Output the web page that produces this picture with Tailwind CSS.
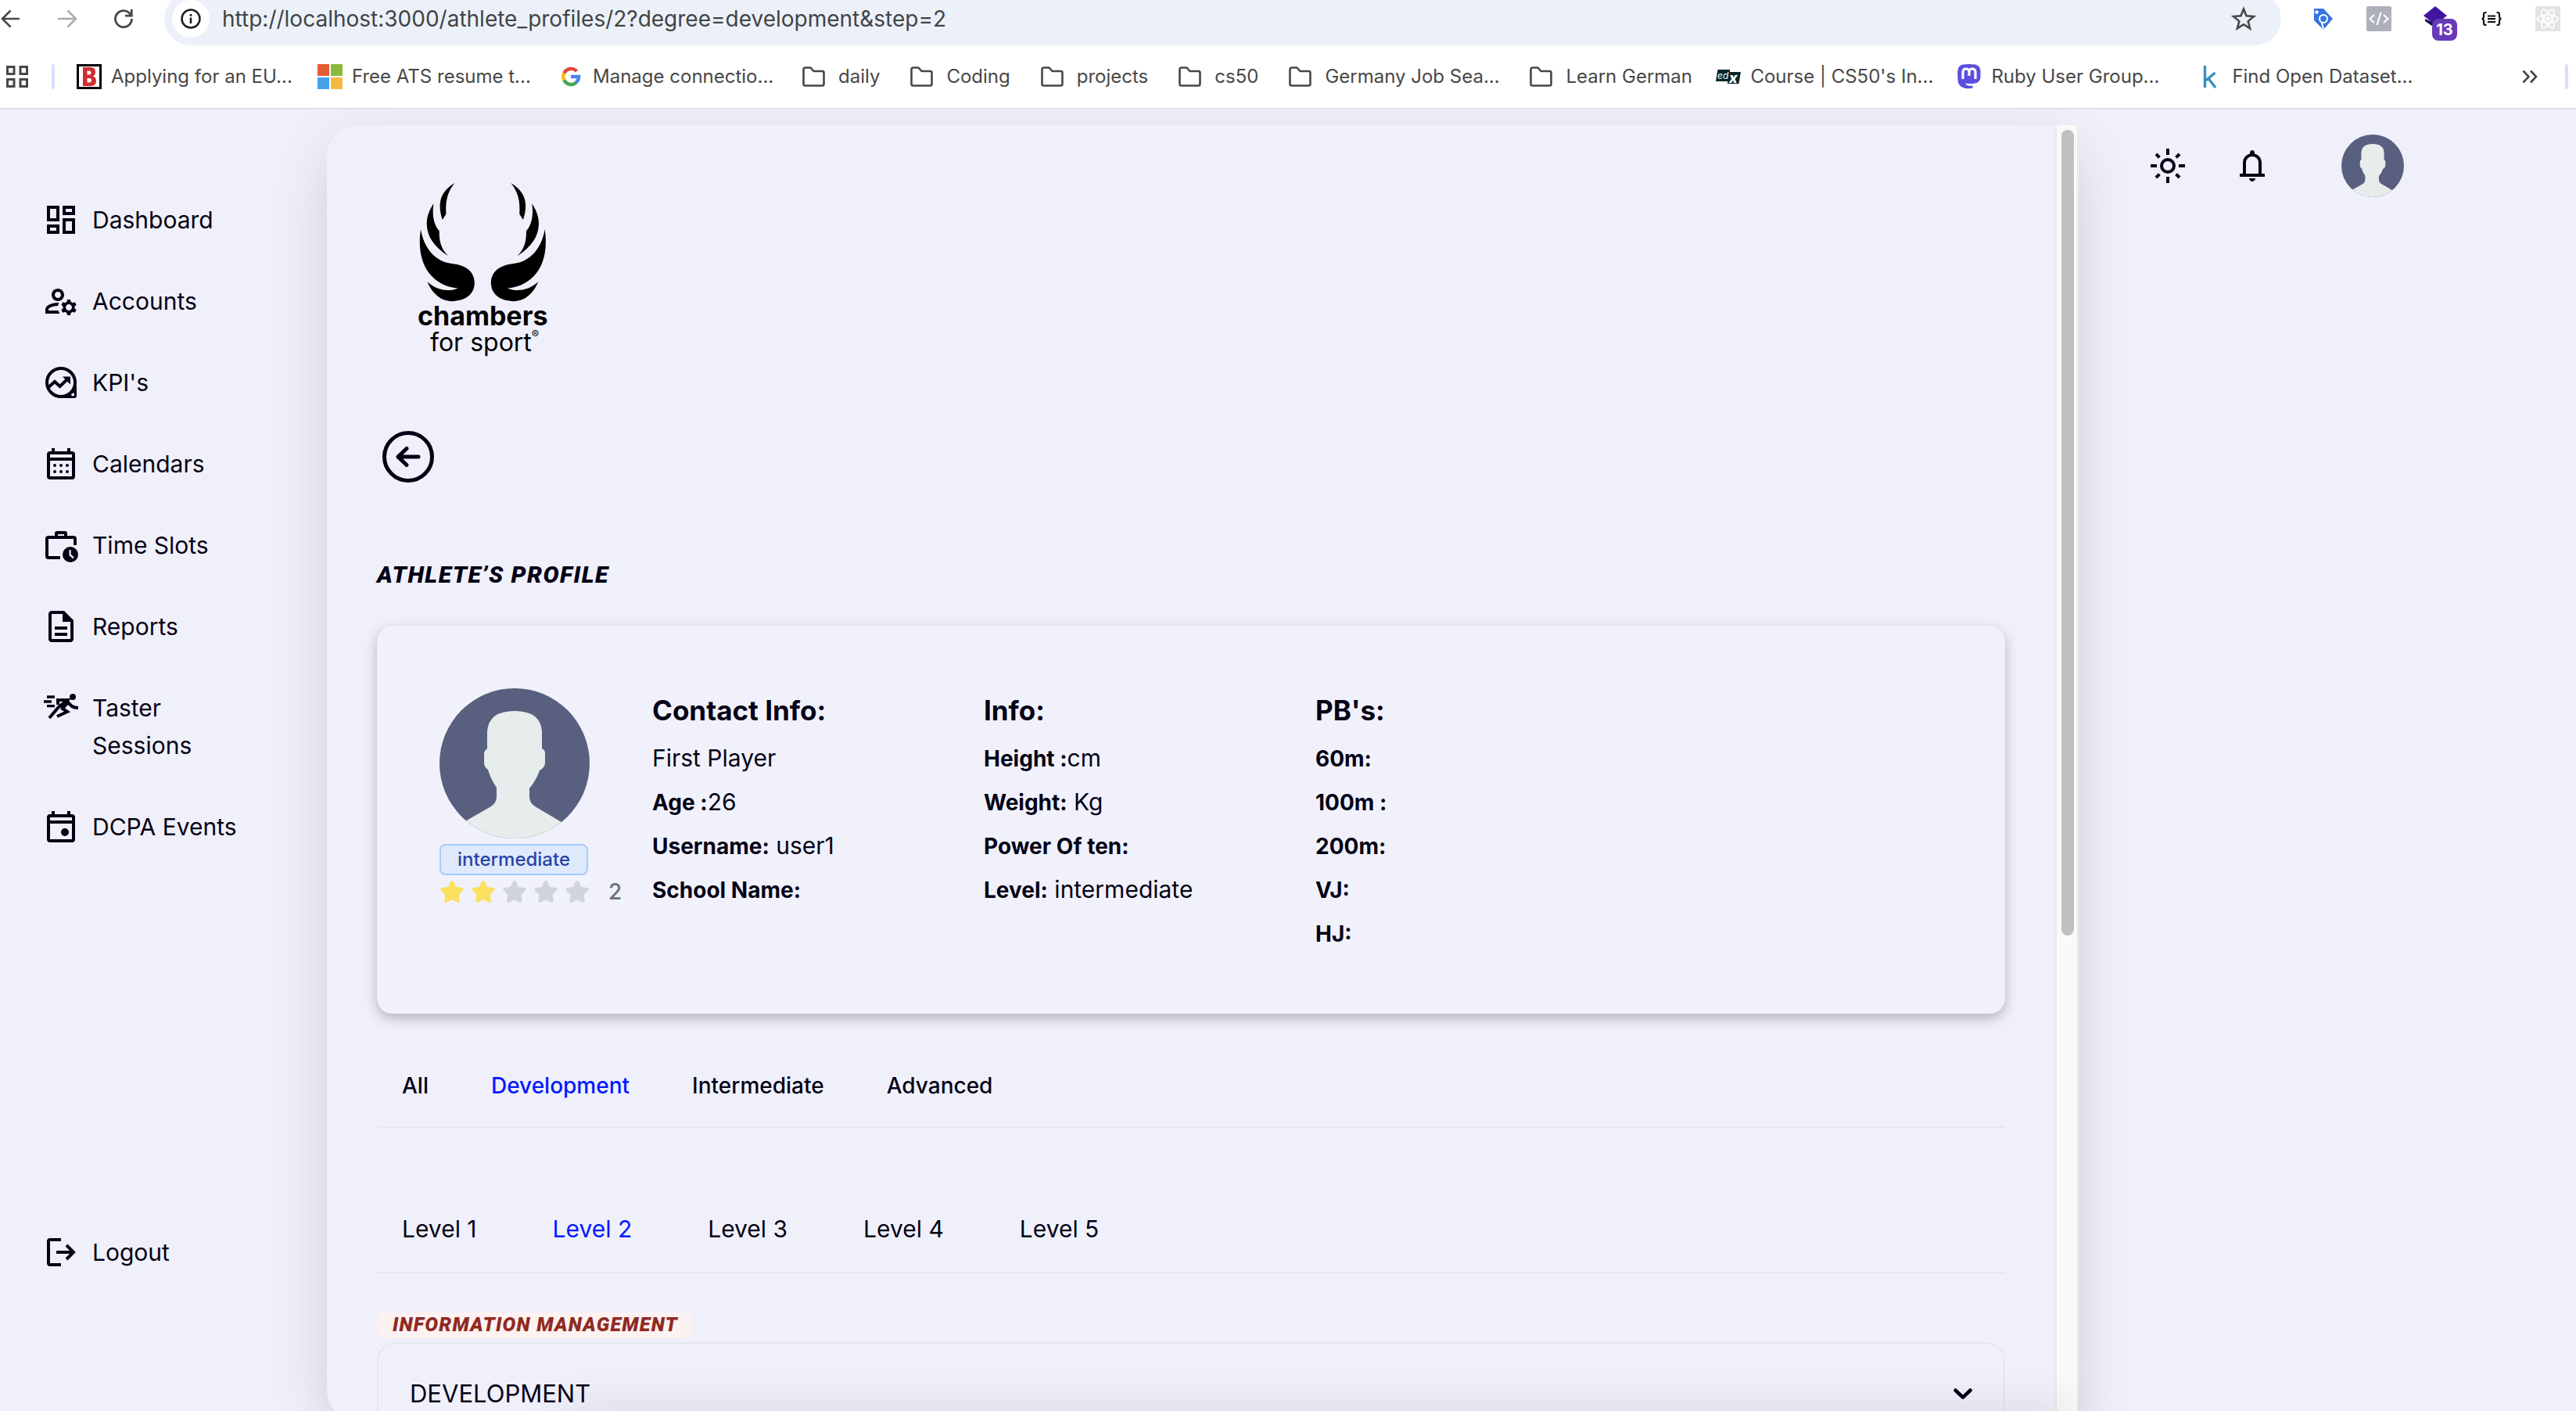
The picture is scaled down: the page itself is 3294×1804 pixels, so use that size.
<!DOCTYPE html>
<html lang="en">
<head>
<meta charset="utf-8">
<title>Athlete's Profile</title>
<script src="https://cdn.jsdelivr.net/npm/@tailwindcss/browser@4"></script>
</head>
<body class="flex h-screen flex-col overflow-hidden bg-[#f0f0fa] font-[Inter,sans-serif] text-[30px] leading-[48px] text-[#040316]">

<!-- shared symbols -->
<svg class="hidden" aria-hidden="true">
  <symbol id="folder" viewBox="0 0 32 32"><path d="M3.500 6.500a2 2 0 0 1 2-2h7l4 4.500h11a2 2 0 0 1 2 2v14.500a2 2 0 0 1-2 2h-22a2 2 0 0 1-2-2z" fill="none" stroke="#474747" stroke-width="2.600" stroke-linejoin="round"/></symbol>
  <symbol id="star" viewBox="0 0 22 20"><path d="M20.924 7.625a1.523 1.523 0 0 0-1.238-1.044l-5.051-.734-2.259-4.577a1.534 1.534 0 0 0-2.752 0L7.365 5.847l-5.051.734A1.535 1.535 0 0 0 1.463 9.2l3.656 3.563-.863 5.031a1.532 1.532 0 0 0 2.226 1.616L11 17.033l4.518 2.375a1.534 1.534 0 0 0 2.226-1.617l-.863-5.03L20.537 9.2a1.523 1.523 0 0 0 .387-1.575Z" fill="currentColor"/></symbol>
  <symbol id="person" viewBox="0 0 192 192"><rect width="192" height="192" fill="#59607f"/><path d="M26 174L66 151Q73 146 73 139V127Q65 115 62 104Q57 101 57 95V83Q58 79 61 77V55Q63 29 96 29Q129 29 131 55V77Q135 79 135 83V95Q135 101 128 105Q124 117 115 128V139Q115 146 122 151L166 177V192H26Z" fill="#e7ecec"/></symbol>
</svg>

<header class="relative z-20 shrink-0 overflow-hidden border-b-2 border-[#e1e1e3] bg-white text-[24px] leading-8 text-[#474747]">
  <div class="flex h-[58px] items-start">
    <div class="flex h-12 w-[210px] shrink-0 items-center">
      <button aria-label="Back" class="w-[73px]"><svg class="h-7 w-7" viewBox="0 0 28 28" fill="none" stroke="#474747" stroke-width="2.600"><path d="M25 14H3M13.500 3.500L3 14l10.500 10.500"/></svg></button>
      <button aria-label="Forward" class="w-[71px]"><svg class="h-7 w-7" viewBox="0 0 28 28" fill="none" stroke="#ababab" stroke-width="2.600"><path d="M1 14h22M13.500 3.500L24 14 13.500 24.500"/></svg></button>
      <button aria-label="Reload"><svg class="h-7 w-7" viewBox="0 0 28 28" fill="none" stroke="#474747" stroke-width="2.800"><path d="M24.500 14A10.500 10.500 0 1 1 21 6.300l3 3.200M24.300 2v8.200H16"/></svg></button>
    </div>
    <div class="-mt-2.5 flex h-[68px] min-w-0 flex-1 items-center rounded-full bg-[#ecf1f9] pl-2.5 pr-8">
      <button aria-label="Site information" class="grid h-12 w-12 shrink-0 place-items-center rounded-full bg-white"><svg class="h-7 w-7" viewBox="0 0 28 28" fill="none" stroke="#1f1f1f" stroke-width="2.600"><circle cx="14" cy="14" r="11.500"/><path d="M14 12.500v7.500M14 8v2.800"/></svg></button>
      <input aria-label="Address" class="ml-4 min-w-0 flex-1 bg-transparent text-[28px] text-[#424446]" value="http://localhost:3000/athlete_profiles/2?degree=development&amp;step=2">
      <button aria-label="Bookmark this page"><svg class="h-8 w-8" viewBox="0 0 32 32" fill="none" stroke="#474747" stroke-width="2.600"><path d="M16 3.500l3.500 8.800 9.500.7-7.300 6.100 2.400 9.300-8.100-5.200-8.100 5.200 2.400-9.300L3 13l9.500-.7z"/></svg></button>
    </div>
    <div class="flex h-12 shrink-0 items-center gap-10 pl-[37px] pr-5">
      <button aria-label="Price tag extension"><svg class="h-8 w-8" viewBox="0 0 32 32"><path d="M5 3h12l12 13-12 14L5 18z" fill="#3574e2"/><circle cx="8.500" cy="7.500" r="2.200" fill="#fff"/><circle cx="17" cy="16" r="5" fill="none" stroke="#fff" stroke-width="2.200"/><path d="M15 21l2 8" stroke="#fff" stroke-width="2"/></svg></button>
      <button aria-label="Code extension"><svg class="h-8 w-8" viewBox="0 0 32 32"><rect width="32" height="32" rx="2" fill="#aeb1bb"/><path d="M10 11l-5.500 5 5.500 5M22 11l5.500 5-5.500 5M18.500 8l-5 16" fill="none" stroke="#fff" stroke-width="2.200"/></svg></button>
      <button aria-label="Extension, 13 items" class="relative"><svg class="h-8 w-8" viewBox="0 0 32 32"><path d="M16 0l15 12-15 12L1 12z" fill="#40159f"/><path d="M3 16l13 6v6L3 19z" fill="#170b5c"/></svg><span class="absolute left-3 top-4 h-7 w-8 rounded-lg bg-[#673ab7] text-center text-[20px] font-bold leading-7 text-white">13</span></button>
      <button aria-label="Braces extension"><svg class="h-8 w-8" viewBox="0 0 32 32" fill="none" stroke="#111" stroke-width="2.200"><path d="M9.500 8H8Q6 8 6 10.500V13Q6 16 3.500 16 6 16 6 19v2.500Q6 24 8 24h1.500M22.500 8H24q2 0 2 2.500V13q0 3 2.500 3-2.500 0-2.500 3v2.500q0 2.500-2 2.500h-1.500M11 12.500h10M11 16.200h10M11 20h10"/></svg></button>
      <button aria-label="React extension"><svg class="h-8 w-8" viewBox="0 0 32 32" fill="none" stroke="#fff" stroke-width="1.600"><rect width="32" height="32" rx="2" fill="#e3e3e3" stroke="none"/><ellipse cx="16" cy="16" rx="13.500" ry="5"/><ellipse cx="16" cy="16" rx="13.500" ry="5" transform="rotate(60 16 16)"/><ellipse cx="16" cy="16" rx="13.500" ry="5" transform="rotate(120 16 16)"/><circle cx="16" cy="16" r="2" fill="#fff"/></svg></button>
    </div>
  </div>

  <nav aria-label="Bookmarks" class="flex h-20 items-center whitespace-nowrap">
    <button aria-label="Apps" class="ml-1.5 shrink-0"><svg class="h-8 w-8" viewBox="0 0 32 32" fill="none" stroke="#474747" stroke-width="3"><path d="M3.500 3.500h8.500v9H3.500zM20 3.500h8.500v9H20zM3.500 19.500h8.500v9H3.500zM20 19.500h8.500v9H20z"/></svg></button>
    <span class="ml-7 mr-7 h-8 w-1 shrink-0 rounded bg-[#d5e1fb]"></span>
    <a href="#" class="flex w-[308px] shrink-0 items-center gap-3"><svg class="h-8 w-8" viewBox="0 0 32 32"><rect x="1.500" y="1.500" width="29" height="29" fill="#fff" stroke="#000" stroke-width="3"/><path fill-rule="evenodd" d="M8 4h10q6 0 6 6 0 4-3 5.500 4 1.500 4 6Q25 28 18 28H8zM13.500 8.500v5H16q2.500 0 2.500-2.500T16 8.500zM13.500 18v5.500h3q2.500 0 2.500-2.700T16.500 18z" fill="#d52b30"/></svg>Applying for an EU...</a>
    <a href="#" class="flex w-[308px] shrink-0 items-center gap-3"><svg class="h-8 w-8" viewBox="0 0 32 32"><path fill="#e55b34" d="M0 0h15v15H0z"/><path fill="#8aba3a" d="M17 0h15v15H17z"/><path fill="#46a2ea" d="M0 17h15v15H0z"/><path fill="#f5b941" d="M17 17h15v15H17z"/></svg>Free ATS resume t...</a>
    <a href="#" class="flex w-[310px] shrink-0 items-center gap-3"><svg class="h-8 w-8" viewBox="0 0 32 32" fill="none" stroke-width="4.400"><path stroke="#e2483c" d="M7.300 11.500A10 10 0 0 1 23.500 9"/><path stroke="#f6bb1c" d="M7.300 20.500a10 10 0 0 1 0-9"/><path stroke="#4aa454" d="M22.800 23.500A10 10 0 0 1 7.300 20.500"/><path stroke="#4c83ec" d="M16 16h10a10 10 0 0 1-3.200 7.500"/></svg>Manage connectio...</a>
    <a href="#" class="flex shrink-0 items-center gap-4 pr-[37px]"><svg class="h-8 w-8"><use href="#folder"/></svg>daily</a>
    <a href="#" class="flex shrink-0 items-center gap-4 pr-[37px]"><svg class="h-8 w-8"><use href="#folder"/></svg>Coding</a>
    <a href="#" class="flex shrink-0 items-center gap-4 pr-[37px]"><svg class="h-8 w-8"><use href="#folder"/></svg>projects</a>
    <a href="#" class="flex shrink-0 items-center gap-4 pr-[37px]"><svg class="h-8 w-8"><use href="#folder"/></svg>cs50</a>
    <a href="#" class="flex w-[308px] shrink-0 items-center gap-4"><svg class="h-8 w-8"><use href="#folder"/></svg>Germany Job Sea...</a>
    <a href="#" class="flex w-60 shrink-0 items-center gap-4"><svg class="h-8 w-8"><use href="#folder"/></svg>Learn German</a>
    <a href="#" class="flex w-[308px] shrink-0 items-center gap-3"><svg class="h-8 w-8" viewBox="0 0 32 32"><path fill="#06262b" d="M2.500 7H18v3h14l-2.500 15H15l.4-3H0z"/><text x="2" y="18.500" font-family="Inter" font-size="12" font-style="italic" fill="#fff">ed</text><text x="17" y="23.500" font-family="Inter" font-size="18" font-weight="800" font-style="italic" fill="#fff">x</text></svg>Course | CS50's In...</a>
    <a href="#" class="flex w-[308px] shrink-0 items-center gap-3"><svg class="h-8 w-8" viewBox="0 0 32 32"><path fill="#5b50de" d="M8 .5q8-1 16 0 6 1 6.500 8v8q-.5 7-7 8-7 1-12 0 .5 4 9 3v3Q6 33.500 2 24 .8 16 1.300 8.500 2 1.500 8 .5z"/><path d="M8 19v-9q0-4 4-4t4 4v5-5q0-4 4-4t4 4v9" fill="none" stroke="#fff" stroke-width="3.200"/></svg>Ruby User Group...</a>
    <a href="#" class="flex shrink-0 items-center gap-3"><svg class="h-8 w-8" viewBox="0 0 32 32" fill="none" stroke="#3a8fbd" stroke-width="3.400"><path d="M9.500 2v28M22.500 11l-12 10M14 18.500L23 30"/></svg>Find Open Dataset...</a>
    <button aria-label="More bookmarks" class="ml-auto"><svg class="h-7 w-7" viewBox="0 0 28 28" fill="none" stroke="#474747" stroke-width="2.600"><path d="M5.500 6.500L12.500 14l-7 7.500M15 6.500l7 7.500-7 7.500"/></svg></button>
    <span class="ml-[31px] mr-2.5 h-8 w-1 shrink-0 rounded bg-[#d5e1fb]"></span>
  </nav>
</header>

<div class="flex min-h-0 flex-1">
  <aside class="flex w-[418px] shrink-0 flex-col pl-[54px]">
    <nav aria-label="Main" class="mt-[117px] flex flex-col gap-14">
      <a href="#" class="flex items-start gap-4"><svg class="h-12 w-12" viewBox="0 0 24 24" fill="currentColor"><path d="M19 5v2h-4V5h4M9 5v6H5V5h4m10 8v6h-4v-6h4M9 17v2H5v-2h4M21 3h-8v6h8V3zM11 3H3v10h8V3zm10 8h-8v10h8V11zm-10 4H3v6h8v-6z"/></svg>Dashboard</a>
      <a href="#" class="flex items-start gap-4"><svg class="h-12 w-12" viewBox="0 0 24 24" fill="currentColor"><path d="M4 18v-.65c0-.34.16-.66.41-.81C6.100 15.530 8.030 15 10 15c.03 0 .05 0 .08.01.1-.7.3-1.370.59-1.980-.22-.02-.44-.03-.67-.03-2.420 0-4.680.67-6.610 1.820-.88.52-1.390 1.500-1.390 2.530V20h9.260c-.42-.6-.75-1.280-.97-2H4zM10 12c2.210 0 4-1.790 4-4s-1.790-4-4-4-4 1.790-4 4 1.790 4 4 4zm0-6c1.100 0 2 .9 2 2s-.9 2-2 2-2-.9-2-2 .9-2 2-2zM20.750 16c0-.22-.03-.42-.06-.63l1.140-1.010-1-1.730-1.450.49c-.32-.27-.68-.48-1.080-.63L18 11h-2l-.3 1.490c-.4.15-.76.36-1.080.63l-1.450-.49-1 1.730 1.140 1.010c-.03.21-.06.41-.06.63s.03.42.06.63l-1.140 1.010 1 1.730 1.450-.49c.32.27.68.48 1.080.63L16 21h2l.3-1.490c.4-.15.76-.36 1.080-.63l1.450.49 1-1.730-1.140-1.010c.03-.21.06-.41.06-.63zM17 18c-1.100 0-2-.9-2-2s.9-2 2-2 2 .9 2 2-.9 2-2 2z"/></svg>Accounts</a>
      <a href="#" class="flex items-start gap-4"><svg class="h-12 w-12" viewBox="0 0 24 24" fill="none" stroke="currentColor" stroke-width="2"><circle cx="12" cy="12" r="9"/><path d="M3.500 15.500L8 11.500l3.300 3 5.200-5"/><path d="M13 8.300h5v5z" fill="currentColor" stroke="none"/><path fill-rule="evenodd" d="M22 12v8.500a1.500 1.500 0 0 1-1.500 1.500H12c4 0 10-4 10-10zM19.500 18.700a1 1 0 1 0 .1 0z" fill="currentColor" stroke="none"/></svg>KPI's</a>
      <a href="#" class="flex items-start gap-4"><svg class="h-12 w-12" viewBox="0 0 24 24" fill="currentColor"><path d="M19 4h-1V2h-2v2H8V2H6v2H5a2 2 0 0 0-2 2v14a2 2 0 0 0 2 2h14a2 2 0 0 0 2-2V6a2 2 0 0 0-2-2zm0 16H5V10h14v10zm0-12H5V6h14v2z"/><circle cx="8" cy="13" r="1"/><circle cx="12" cy="13" r="1"/><circle cx="16" cy="13" r="1"/><circle cx="8" cy="17" r="1"/><circle cx="12" cy="17" r="1"/><circle cx="16" cy="17" r="1"/></svg>Calendars</a>
      <a href="#" class="flex items-start gap-4"><svg class="h-12 w-12" viewBox="0 0 24 24" fill="none" stroke="currentColor" stroke-width="2"><path d="M11.500 20H4a1 1 0 0 1-1-1V8a1 1 0 0 1 1-1h16a1 1 0 0 1 1 1v4M9 7V4.500a.5.5 0 0 1 .5-.5h5a.5.5 0 0 1 .5.5V7"/><circle cx="18" cy="18" r="5" fill="currentColor" stroke="none"/><path d="M17.800 15v3.200l2.200 2" stroke="#f0f0fa" stroke-width="1.100"/></svg>Time Slots</a>
      <a href="#" class="flex items-start gap-4"><svg class="h-12 w-12" viewBox="0 0 24 24" fill="currentColor"><path d="M8 16h8v2H8zm0-4h8v2H8zm6-10H6c-1.100 0-2 .9-2 2v16c0 1.100.89 2 1.990 2H18c1.100 0 2-.9 2-2V8l-6-6zm4 18H6V4h7v5h5v11z"/></svg>Reports</a>
      <a href="#" class="flex items-start gap-4"><svg class="h-12 w-12" viewBox="0 0 24 24" fill="none" stroke="currentColor" stroke-width="2"><circle cx="19.500" cy="5" r="2" fill="currentColor" stroke="none"/><path d="M3 5h5M1 8h5M3 10.800h5" stroke-width="1.700"/><path d="M10 10V7h6l-5.500 4.500L4.500 18.500M16 7.500c1.500 3 3.500 4.500 7 4.500M15.500 9.500l-2.500 3 3 2-6.500 3"/><path d="M15 6.500l2.500 2.500-4 4-2.500-1.500z" fill="currentColor" stroke="none"/></svg><span class="w-40">Taster Sessions</span></a>
      <a href="#" class="flex items-start gap-4"><svg class="h-12 w-12" viewBox="0 0 24 24" fill="currentColor"><path d="M19 4h-1V2h-2v2H8V2H6v2H5a2 2 0 0 0-2 2v14a2 2 0 0 0 2 2h14a2 2 0 0 0 2-2V6a2 2 0 0 0-2-2zm0 16H5V10h14v10zm0-12H5V6h14v2z"/><circle cx="14.500" cy="15.500" r="2.500"/></svg>DCPA Events</a>
    </nav>
    <a href="#" class="mb-[179px] mt-auto flex items-start gap-4"><svg class="h-12 w-12" viewBox="0 0 24 24" fill="none" stroke="currentColor" stroke-width="2"><path d="M12 4H5a1 1 0 0 0-1 1v14a1 1 0 0 0 1 1h7M9 12h11M15.500 7.500L20 12l-4.500 4.500"/></svg>Logout</a>
  </aside>

  <main class="-mb-3.5 mt-5 flex min-w-0 flex-1 rounded-[40px] bg-[#f0f0fb] shadow-[0_24px_80px_-10px_rgba(0,0,0,0.18)]">
    <div class="min-w-0 flex-1 overflow-hidden px-16">
      <div class="ml-[52px] mt-[72px] w-[167px] text-black">
        <svg class="h-[156px] w-[167px]" viewBox="0 0 500 382" preserveAspectRatio="none" aria-hidden="true">
          <g id="wing"><path d="M142 5C110 37 107 68 109 102L95 120C74 68 87 32 142 5Z"/><path d="M61 69C55 108 62 135 83 155C82 190 92 213 117 233C62 205 36 172 35 133C35 108 46 88 61 69Z"/><path d="M12 150C25 212 70 251 130 257C187 261 218 284 218 318C218 353 182 375 130 375C88 374 57 352 37 314C74 342 122 346 155 334C70 330 -10 272 12 150Z"/></g>
          <use href="#wing" transform="translate(499 0) scale(-1 1)"/>
        </svg>
        <p class="text-[34px] font-bold leading-8">chambers</p>
        <p class="flex h-8 items-start pl-4 text-[32px] leading-9">for sport<span class="text-[14px] leading-4">®</span></p>
      </div>
      <a href="#" aria-label="Go back" class="ml-[7px] mt-[99px] block w-[66px]"><svg class="h-[66px] w-[66px]" viewBox="0 0 66 66" fill="none" stroke="currentColor" stroke-width="5" stroke-linecap="round" stroke-linejoin="round"><circle cx="33" cy="33" r="30.500"/><path d="M46 33H20M31 22.500L20 33l11 10.500"/></svg></a>
      <h1 class="mt-[98px] font-[Roboto,sans-serif] text-[30px] font-black italic leading-10 tracking-wider">ATHLETE’S PROFILE</h1>

      <section class="mt-[45px] flex h-[496px] rounded-[20px] bg-[#f1f1fb] p-20 shadow-[0_6px_16px_rgba(0,0,0,0.25)]">
        <div class="w-[272px] shrink-0">
          <svg class="h-48 w-48 rounded-full" role="img" aria-label="First Player"><use href="#person"/></svg>
          <p class="mt-[7px] h-10 w-[190px] rounded-lg border-2 border-[#a4cafe] bg-[#dfe9fc] text-center text-[24px] font-medium leading-9 text-[#2643a6]">intermediate</p>
          <div class="mt-[5px] flex h-8 items-center gap-2 text-[#d1d5db]">
            <svg class="h-8 w-8 text-[#fce060]"><use href="#star"/></svg>
            <svg class="h-8 w-8 text-[#fce060]"><use href="#star"/></svg>
            <svg class="h-8 w-8"><use href="#star"/></svg>
            <svg class="h-8 w-8"><use href="#star"/></svg>
            <svg class="h-8 w-8"><use href="#star"/></svg>
            <span class="ml-4 text-[28px] font-medium text-gray-500">2</span>
          </div>
        </div>
        <div class="w-[424px] leading-[56px] [&>p]:h-14">
          <h2 class="mb-[5px] text-[35px] font-bold leading-[56px]">Contact Info:</h2>
          <p>First Player</p>
          <p><strong class="text-[28px]">Age :</strong>26</p>
          <p><strong class="text-[28px]">Username:</strong> user1</p>
          <p><strong class="text-[28px]">School Name:</strong></p>
        </div>
        <div class="w-[424px] leading-[56px] [&>p]:h-14">
          <h2 class="mb-[5px] text-[35px] font-bold leading-[56px]">Info:</h2>
          <p><strong class="text-[28px]">Height :</strong>cm</p>
          <p><strong class="text-[28px]">Weight:</strong> Kg</p>
          <p><strong class="text-[28px]">Power Of ten:</strong></p>
          <p><strong class="text-[28px]">Level:</strong> intermediate</p>
        </div>
        <div class="w-[424px] leading-[56px] [&>p]:h-14">
          <h2 class="mb-[5px] text-[35px] font-bold leading-[56px]">PB's:</h2>
          <p><strong class="text-[28px]">60m:</strong></p>
          <p><strong class="text-[28px]">100m :</strong></p>
          <p><strong class="text-[28px]">200m:</strong></p>
          <p><strong class="text-[28px]">VJ:</strong></p>
          <p><strong class="text-[28px]">HJ:</strong></p>
        </div>
      </section>

      <nav aria-label="Degree" class="mt-[72px] flex gap-4 border-b-2 border-[#e6e7eb] pb-8 text-[28px] font-medium leading-10">
        <a href="#" class="px-8">All</a>
        <a href="#" aria-current="page" class="px-8 text-[#001aff]">Development</a>
        <a href="#" class="px-8">Intermediate</a>
        <a href="#" class="px-8">Advanced</a>
      </nav>
      <nav aria-label="Level" class="mt-[105px] flex gap-[33px] border-b-2 border-[#e6e7eb] pb-[31px]">
        <a href="#" class="px-8">Level 1</a>
        <a href="#" aria-current="page" class="px-8 text-[#001aff]">Level 2</a>
        <a href="#" class="px-8">Level 3</a>
        <a href="#" class="px-8">Level 4</a>
        <a href="#" class="px-8">Level 5</a>
      </nav>

      <h2 class="mt-[50px] h-[33px] w-[402px] rounded-lg bg-[#fdf2f2] pl-5 font-[Roboto,sans-serif] text-[25px] font-black italic leading-8 tracking-wider text-[#8f2a22]">INFORMATION MANAGEMENT</h2>
      <button class="mt-[5px] flex w-full items-center justify-between rounded-t-3xl border-2 border-b-0 border-[#e6e7eb] px-10 py-10"><span class="text-[31px]">DEVELOPMENT</span><svg class="h-6 w-6" viewBox="0 0 24 24" fill="none" stroke="currentColor" stroke-width="4.500" stroke-linecap="round" stroke-linejoin="round"><path d="M2.500 7.500l9.500 9 9.500-9"/></svg></button>
    </div>
    <div class="w-[30px] shrink-0 border-x-2 border-[#e9e9eb] bg-[#fafafa] pl-1.5 pt-1.5"><div class="h-[1030px] w-4 rounded-full bg-[#c1c1c1]"></div></div>
  </main>

  <div class="flex w-[636px] shrink-0 items-start pl-[90px] pt-8">
    <button aria-label="Light mode" class="mt-4"><svg class="h-12 w-12" viewBox="0 0 24 24" fill="none" stroke="currentColor" stroke-width="2"><circle cx="12" cy="12" r="4"/><path d="M12 1v4M12 19v4M1 12h4M19 12h4M4.500 4.500l2.200 2.200M17.300 17.300l2.200 2.200M4.500 19.500l2.200-2.200M17.300 6.700l2.200-2.200"/></svg></button>
    <button aria-label="Notifications" class="ml-[60px] mt-4"><svg class="h-12 w-12" viewBox="0 0 24 24" fill="currentColor"><path d="M4 19v-2h2v-7q0-2.075 1.250-3.688T10.500 4.200v-.7q0-.625.437-1.062T12 2q.625 0 1.063.438T13.500 3.500v.7q2 .5 3.250 2.112T18 10v7h2v2zm8 3q-.825 0-1.412-.587T10 20h4q0 .825-.587 1.413T12 22M8 17h8v-7q0-1.650-1.175-2.825T12 6 9.175 7.175 8 10z"/></svg></button>
    <a href="#" aria-label="Account" class="ml-[90px] block"><svg class="h-20 w-20 rounded-full"><use href="#person"/></svg></a>
  </div>
</div>

<div class="fixed left-[720px] right-[634px] top-full h-10 shadow-[0_0_60px_rgba(0,0,0,0.12)]"></div>
</body>
</html>
